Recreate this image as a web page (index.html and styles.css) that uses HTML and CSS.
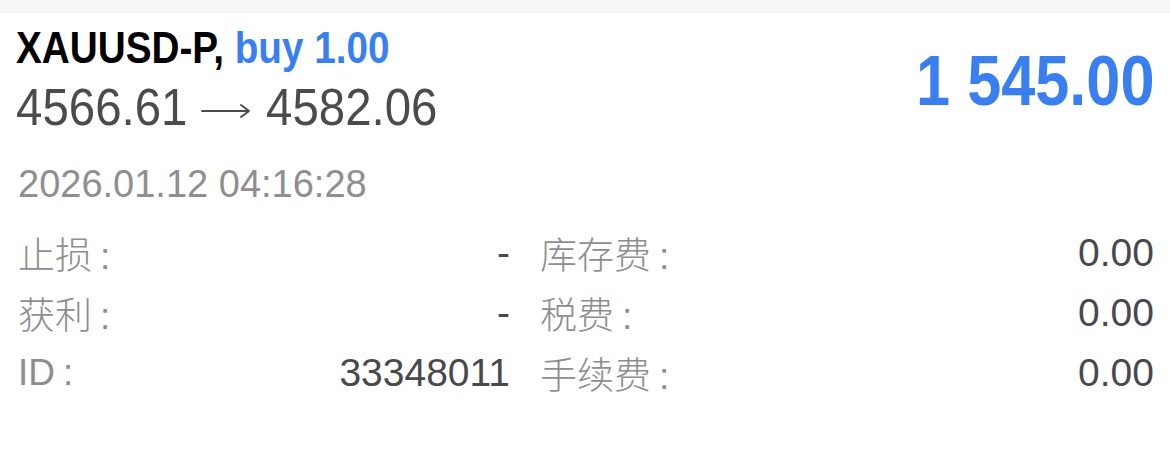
FILE: index.html
```html
<!DOCTYPE html>
<html lang="zh-CN">
<head>
    <meta charset="UTF-8" />
    <meta name="viewport" content="width=device-width, initial-scale=1.0" />
    <title>XAUUSD-P</title>
    <link rel="stylesheet" href="styles.css">
</head>
<body>
    <!-- Top strip -->
    <div class="top-strip"></div>

    <!-- Deal card -->
    <div class="deal">
        <div class="deal-head">
            <div class="deal-info">
                <div class="deal-title">
                    <span class="symbol">XAUUSD-P,</span>
                    <span class="side">buy 1.00</span>
                </div>
                <div class="deal-prices">
                    <span>4566.61</span>
                    <svg class="arrow" width="52" height="22" viewBox="0 0 52 22">
                        <path d="M2 11 H49 M41 5 L49 11 L41 17" fill="none" stroke="#4a4a4f" stroke-width="2" stroke-linecap="round" stroke-linejoin="round"/>
                    </svg>
                    <span>4582.06</span>
                </div>
            </div>
            <div class="deal-profit">1 545.00</div>
        </div>

        <div class="deal-time">2026.01.12 04:16:28</div>

        <div class="deal-grid">
            <div class="field"><span class="label">止损<span class="colon">:</span></span><span class="value">-</span></div>
            <div class="field"><span class="label">库存费<span class="colon">:</span></span><span class="value">0.00</span></div>
            <div class="field"><span class="label">获利<span class="colon">:</span></span><span class="value">-</span></div>
            <div class="field"><span class="label">税费<span class="colon">:</span></span><span class="value">0.00</span></div>
            <div class="field"><span class="label">ID<span class="colon">:</span></span><span class="value">33348011</span></div>
            <div class="field"><span class="label">手续费<span class="colon">:</span></span><span class="value">0.00</span></div>
        </div>
    </div>
</body>
</html>
```

FILE: styles.css
```css
body {
    margin: 0;
    padding: 0;
    background: #ffffff;
    font-family: "Liberation Sans", "Noto Sans CJK SC", sans-serif;
    color: #4a4a4f;
}

/* Top strip */
.top-strip {
    height: 12px;
    background: #f7f7f7;
    border-bottom: 1px solid #f0f0f0;
}

/* Deal card */
.deal {
    padding: 11px 16px 0 18px;
}

.deal-head {
    display: flex;
    justify-content: space-between;
    align-items: center;
}

/* narrow bold look: no condensed face installed, so squeeze it */
.deal-title {
    font-weight: bold;
    font-size: 45px;
    line-height: 48px;
    margin-left: -2px;
    white-space: nowrap;
    transform: scaleX(0.86);
    transform-origin: left center;
}

.symbol {
    color: #000000;
}

.side {
    color: #3a7ff0;
}

.deal-prices {
    display: flex;
    align-items: center;
    gap: 14px;
    margin-top: 5px;
    margin-left: -2px;
    font-size: 51px;
    line-height: 62px;
    color: #4a4a4f;
    white-space: nowrap;
}

.deal-prices span {
    display: inline-block;
    width: 172px;
    transform: scaleX(0.93);
    transform-origin: left center;
}

.arrow {
    margin-top: 6px;
    margin-left: -2px;
}

.deal-profit {
    font-weight: bold;
    font-size: 70px;
    color: #3a7ff0;
    white-space: nowrap;
    margin-top: -2px;
    transform: scaleX(0.875);
    transform-origin: right center;
}

.deal-time {
    margin-top: 25px;
    font-size: 38px;
    line-height: 40px;
    color: #8e8e93;
}

.deal-grid {
    display: grid;
    grid-template-columns: 492px 1fr;
    column-gap: 30px;
    margin-top: 19px;
}

.field {
    display: flex;
    justify-content: space-between;
    align-items: center;
    height: 60px;
    font-size: 39px;
}

.label {
    color: #8e8e8e;
    font-size: 37px;
    font-weight: 300;
}

.colon {
    margin-left: 8px;
}

.value {
    color: #48484d;
}
```
